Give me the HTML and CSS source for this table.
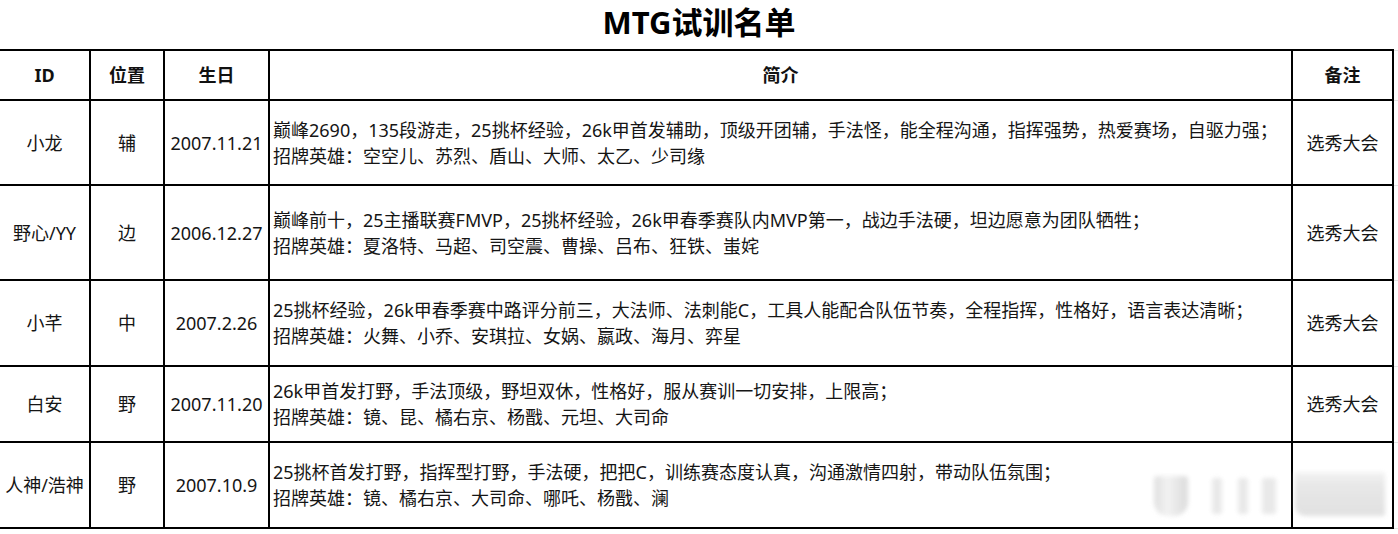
FILE: index.html
```html
<!DOCTYPE html>
<html lang="zh-CN">
<head>
<meta charset="utf-8">
<title>MTG试训名单</title>
<link rel="stylesheet" href="styles.css">
</head>
<body>
<div class="sheet">
  <h1 class="title">MTG试训名单</h1>
  <table class="roster">
    <colgroup>
      <col class="c-id"><col class="c-pos"><col class="c-date"><col class="c-intro"><col class="c-note"><col class="c-grid">
    </colgroup>
    <thead>
      <tr class="r-head">
        <th>ID</th><th>位置</th><th>生日</th><th>简介</th><th>备注</th><td class="grid"></td>
      </tr>
    </thead>
    <tbody>
      <tr class="r1">
        <td>小龙</td><td>辅</td><td>2007.11.21</td>
        <td class="intro">巅峰2690，135段游走，25挑杯经验，26k甲首发辅助，顶级开团辅，手法怪，能全程沟通，指挥强势，热爱赛场，自驱力强；<br>招牌英雄：空空儿、苏烈、盾山、大师、太乙、少司缘</td>
        <td>选秀大会</td><td class="grid"></td>
      </tr>
      <tr class="r2">
        <td>野心/YY</td><td>边</td><td>2006.12.27</td>
        <td class="intro">巅峰前十，25主播联赛FMVP，25挑杯经验，26k甲春季赛队内MVP第一，战边手法硬，坦边愿意为团队牺牲；<br>招牌英雄：夏洛特、马超、司空震、曹操、吕布、狂铁、蚩姹</td>
        <td>选秀大会</td><td class="grid"></td>
      </tr>
      <tr class="r3">
        <td>小芊</td><td>中</td><td>2007.2.26</td>
        <td class="intro">25挑杯经验，26k甲春季赛中路评分前三，大法师、法刺能C，工具人能配合队伍节奏，全程指挥，性格好，语言表达清晰；<br>招牌英雄：火舞、小乔、安琪拉、女娲、嬴政、海月、弈星</td>
        <td>选秀大会</td><td class="grid"></td>
      </tr>
      <tr class="r4">
        <td>白安</td><td>野</td><td>2007.11.20</td>
        <td class="intro">26k甲首发打野，手法顶级，野坦双休，性格好，服从赛训一切安排，上限高；<br>招牌英雄：镜、昆、橘右京、杨戬、元坦、大司命</td>
        <td>选秀大会</td><td class="grid"></td>
      </tr>
      <tr class="r5">
        <td>人神/浩神</td><td>野</td><td>2007.10.9</td>
        <td class="intro">25挑杯首发打野，指挥型打野，手法硬，把把C，训练赛态度认真，沟通激情四射，带动队伍氛围；<br>招牌英雄：镜、橘右京、大司命、哪吒、杨戬、澜</td>
        <td></td><td class="grid"></td>
      </tr>
    </tbody>
  </table>
  <div class="watermark" aria-hidden="true">
    <span class="wm wm-u"></span>
    <span class="wm wm-bar b1"></span>
    <span class="wm wm-bar b2"></span>
    <span class="wm wm-bar b3"></span>
    <span class="wm wm-block"></span>
  </div>
</div>
</body>
</html>
```

FILE: styles.css
```css
html, body {
  margin: 0;
  padding: 0;
  background: #fff;
}

body {
  font-family: "Noto Sans", "Noto Sans CJK SC", sans-serif;
  color: #111;
  width: 1398px;
  height: 534px;
  overflow: hidden;
}

.sheet {
  position: relative;
  width: 1398px;
  height: 534px;
}

.title {
  margin: 0;
  height: 44px;
  padding-bottom: 5px;
  display: flex;
  align-items: center;
  justify-content: center;
  font-family: "Noto Sans", "Noto Sans CJK SC", sans-serif;
  font-weight: 700;
  font-size: 31px;
  line-height: 1;
  color: #000;
}

.roster {
  border-collapse: collapse;
  table-layout: fixed;
  margin-left: -2px;
  width: 1400px;
}

.c-id { width: 91px; }
.c-pos { width: 74px; }
.c-date { width: 105px; }
.c-intro { width: 1023px; }
.c-note { width: 101px; }
.c-grid { width: 6px; }

.roster th,
.roster td {
  border: 2px solid #000;
  text-align: center;
  vertical-align: middle;
  padding: 0;
  font-size: 18px;
  line-height: 26px;
  white-space: nowrap;
  overflow: hidden;
  color: #151515;
}

.roster th {
  font-weight: 700;
  font-size: 18px;
  color: #111;
}

.roster td.intro {
  text-align: left;
  padding-left: 3px;
}

.roster td.grid {
  border-top: 1px solid #e4e4e4;
  border-bottom: 1px solid #e4e4e4;
  border-right: 1px solid #e4e4e4;
  border-left: 2px solid #000;
}

.r-head { height: 50px; }
.r1 { height: 85px; }
.r2 { height: 95px; }
.r3 { height: 86px; }
.r4 { height: 76px; }
.r5 { height: 86px; }

.watermark {
  position: absolute;
  left: 1150px;
  top: 470px;
  width: 240px;
  height: 52px;
  filter: blur(2px);
  opacity: 0.75;
}

.wm {
  position: absolute;
  display: block;
  background: #dcdcdc;
}

.wm-u {
  left: 4px;
  top: 6px;
  width: 34px;
  height: 40px;
  border-radius: 4px 4px 14px 14px;
  background: linear-gradient(90deg, #d6d6d6 0, #eeeeee 40%, #d0d0d0 100%);
}

.wm-bar {
  top: 8px;
  width: 10px;
  height: 36px;
  background: #e2e2e2;
  border-radius: 3px;
}

.b1 { left: 62px; }
.b2 { left: 88px; }
.b3 { left: 112px; width: 14px; }

.wm-block {
  left: 145px;
  top: 2px;
  width: 90px;
  height: 44px;
  background: linear-gradient(180deg, #f0f0f0 0, #e0e0e0 30%, #d8d8d8 100%);
  border-radius: 2px 2px 2px 10px;
}
```
